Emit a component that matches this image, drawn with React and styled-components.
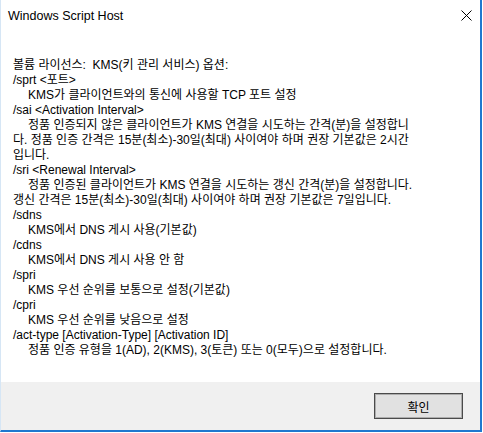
import React from 'react';
import styled, {createGlobalStyle} from 'styled-components';

const GlobalStyle = createGlobalStyle`
html, body {
margin: 0;
padding: 0;
background: #ffffff;
}
`;

const lines = [
    {text: '볼륨 라이선스:  KMS(키 관리 서비스) 옵션:'},
    {text: '/sprt <포트>'},
    {text: 'KMS가 클라이언트와의 통신에 사용할 TCP 포트 설정', indent: true},
    {text: '/sai <Activation Interval>'},
    {text: '정품 인증되지 않은 클라이언트가 KMS 연결을 시도하는 간격(분)을 설정합니', indent: true},
    {text: '다. 정품 인증 간격은 15분(최소)-30일(최대) 사이여야 하며 권장 기본값은 2시간'},
    {text: '입니다.'},
    {text: '/sri <Renewal Interval>'},
    {text: '정품 인증된 클라이언트가 KMS 연결을 시도하는 갱신 간격(분)을 설정합니다.', indent: true},
    {text: '갱신 간격은 15분(최소)-30일(최대) 사이여야 하며 권장 기본값은 7일입니다.'},
    {text: '/sdns'},
    {text: 'KMS에서 DNS 게시 사용(기본값)', indent: true},
    {text: '/cdns'},
    {text: 'KMS에서 DNS 게시 사용 안 함', indent: true},
    {text: '/spri'},
    {text: 'KMS 우선 순위를 보통으로 설정(기본값)', indent: true},
    {text: '/cpri'},
    {text: 'KMS 우선 순위를 낮음으로 설정', indent: true},
    {text: '/act-type [Activation-Type] [Activation ID]'},
    {text: '정품 인증 유형을 1(AD), 2(KMS), 3(토큰) 또는 0(모두)으로 설정합니다.', indent: true},
];

const App = () => (
    <>
        <GlobalStyle/>
        <Window>
            <TitleBar>
                <Title>{'Windows Script Host'}</Title>
                <CloseButton aria-label={'닫기'}>
                    <svg width="11" height="11" viewBox="0 0 11 11">
                        <path d="M0.5 0.5 L10.5 10.5 M10.5 0.5 L0.5 10.5" stroke="#000" strokeWidth="1" fill="none"/>
                    </svg>
                </CloseButton>
            </TitleBar>

            <Message>
                {lines.map((l, i) => <Line key={i} $indent={l.indent}>{l.text}</Line>)}
            </Message>

            <Footer>
                <OkButton>{'확인'}</OkButton>
            </Footer>
        </Window>
    </>
);

export default App;


const Window = styled.div`
width: 482px;
height: 432px;
box-sizing: border-box;
display: flex;
flex-direction: column;
background: #ffffff;
border-right: 2px solid #1f78cf;
border-bottom: 2px solid #1f78cf;
border-left: 1px solid #d6e6f5;
font-family: "Noto Sans CJK KR", sans-serif;
color: #000;
`;

const TitleBar = styled.div`
height: 30px;
display: flex;
align-items: center;
justify-content: space-between;
padding-left: 7px;
`;

const Title = styled.div`
font-family: "Liberation Sans", "Noto Sans CJK KR", sans-serif;
font-size: 12.5px;
padding-top: 1px;
`;

const CloseButton = styled.div`
width: 28px;
height: 30px;
display: flex;
align-items: center;
justify-content: center;
`;

const Message = styled.div`
flex: 1;
padding: 28px 0 0 12px;
font-family: "Liberation Sans", "Noto Sans CJK KR", sans-serif;
font-size: 12px;
line-height: 15px;
`;

const Line = styled.div`
white-space: pre;
padding-left: ${p => p.$indent ? '15px' : '0'};
`;

const Footer = styled.div`
height: 48px;
display: flex;
align-items: center;
justify-content: flex-end;
padding-right: 17px;
background: #f0f0f0;
`;

const OkButton = styled.button`
width: 89px;
height: 26px;
box-sizing: border-box;
border: 1px solid #4a4a4a;
box-shadow: inset 0 0 0 1px #adadad;
background: #e1e1e1;
font-family: "Noto Sans CJK KR", sans-serif;
font-size: 12px;
color: #000;
padding: 0;
`;
